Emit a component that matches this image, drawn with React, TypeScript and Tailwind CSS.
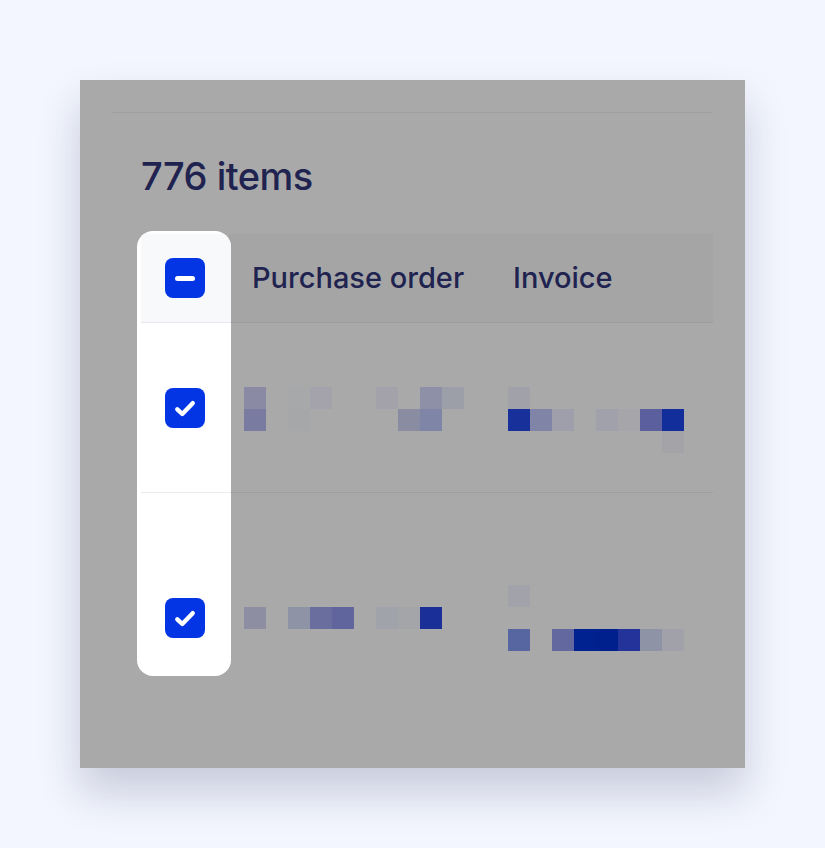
import React from "react"

type Px = [number, number, string]

// pixelated (redacted) cell content, 22px blocks
function Mosaic({ w, h, px }: { w: number; h: number; px: Px[] }) {
  return (
    <svg width={w} height={h} viewBox={`0 0 ${w} ${h}`} className="block">
      {px.map(([x, y, c], i) => (
        <rect key={i} x={x} y={y} width={22} height={22} fill={c} />
      ))}
    </svg>
  )
}

const row1Po: Px[] = [
  [0, 0, "#8a8aa4"],
  [0, 22, "#7a7ba0"],
  [44, 0, "#a6a8aa"],
  [44, 22, "#a5a7a9"],
  [66, 0, "#a4a3ab"],
  [132, 0, "#a3a2ab"],
  [154, 22, "#8a8ca2"],
  [176, 0, "#8d90a6"],
  [176, 22, "#7f85a6"],
  [198, 0, "#9c9ea8"],
]

const row1Inv: Px[] = [
  [0, 0, "#a1a1aa"],
  [0, 22, "#18309a"],
  [22, 22, "#8084a6"],
  [44, 22, "#9e9fab"],
  [88, 22, "#a0a1aa"],
  [110, 22, "#a6a6aa"],
  [132, 22, "#5c5f9e"],
  [154, 22, "#122e9a"],
  [154, 44, "#a4a4a8"],
]

const row2Po: Px[] = [
  [0, 0, "#8e8ea2"],
  [44, 0, "#8e93a6"],
  [66, 0, "#6a6e9e"],
  [88, 0, "#60659e"],
  [132, 0, "#a1a3aa"],
  [154, 0, "#a4a5a8"],
  [176, 0, "#1a3098"],
]

const row2Inv: Px[] = [
  [0, 0, "#a2a2ab"],
  [0, 44, "#5766a0"],
  [44, 44, "#63699f"],
  [66, 44, "#002291"],
  [88, 44, "#00208e"],
  [110, 44, "#233399"],
  [132, 44, "#8f93a6"],
  [154, 44, "#a0a1a9"],
]

function Checkbox({ mixed }: { mixed?: boolean }) {
  return (
    <div className="w-10 h-10 rounded-lg bg-[#0335e5] flex items-center justify-center">
      {mixed ? (
        <div className="w-5 h-[5px] rounded-full bg-white" />
      ) : (
        <svg width="40" height="40" viewBox="0 0 40 40">
          <path
            d="M12.3 21.3 L17.3 26 L27.7 15.2"
            fill="none"
            stroke="white"
            strokeWidth="4.4"
            strokeLinecap="round"
            strokeLinejoin="round"
          />
        </svg>
      )}
    </div>
  )
}

export default function App() {
  return (
    <div
      className="w-full min-h-screen bg-[#f3f6fe] pt-20 pl-20"
      style={{ fontFamily: "Inter, 'Noto Sans', sans-serif" }}
    >
      <div className="w-[665px] h-[688px] bg-[#a9a9a9] px-8 pt-8 shadow-[0_24px_40px_rgba(30,35,80,0.2)]">
        {/* top rule */}
        <div className="h-px bg-[#a0a0a4]" />

        <h2 className="mt-[44px] pl-[29px] text-[38px] leading-none font-medium text-[#20234f] tracking-[-0.5px]">
          776 items
        </h2>

        {/* table */}
        <div className="mt-[39px] ml-[29px] flex">
          {/* selection column, spotlighted */}
          <div className="relative w-[88px] shrink-0">
            <div className="absolute -left-1 -top-[3px] w-[94px] h-[445px] rounded-2xl bg-white overflow-hidden pl-1 pt-[3px]">
              <div className="h-[89px] bg-[#f8f9fb] border-b border-[#e7e8ee]" />
              <div className="h-[170px] border-b border-[#ebebef]" />
            </div>
            <div className="relative h-[89px] flex items-center justify-center pb-px">
              <Checkbox mixed />
            </div>
            <div className="relative h-[170px] flex items-center justify-center pb-px">
              <Checkbox />
            </div>
            <div className="relative h-[250px] flex items-center justify-center">
              <Checkbox />
            </div>
          </div>

          {/* data columns */}
          <div className="flex-1">
            <div className="h-[89px] bg-[#a5a5a6] border-b border-[#9c9ca2] grid grid-cols-[261px_1fr] items-center text-[29px] font-medium text-[#20234f] pb-px">
              <div className="pl-[23px]">Purchase order</div>
              <div className="pl-[23px]">Invoice</div>
            </div>
            <div className="h-[170px] border-b border-[#9e9ea2] grid grid-cols-[261px_1fr] pb-px">
              <div className="pl-[15px] flex items-start pt-[64px]">
                <Mosaic w={220} h={44} px={row1Po} />
              </div>
              <div className="pl-[18px] flex items-start pt-[64px]">
                <Mosaic w={176} h={66} px={row1Inv} />
              </div>
            </div>
            <div className="h-[250px] grid grid-cols-[261px_1fr]">
              <div className="pl-[15px] pt-[114px]">
                <Mosaic w={198} h={22} px={row2Po} />
              </div>
              <div className="pl-[18px] pt-[92px]">
                <Mosaic w={176} h={66} px={row2Inv} />
              </div>
            </div>
          </div>
        </div>
      </div>
    </div>
  )
}
